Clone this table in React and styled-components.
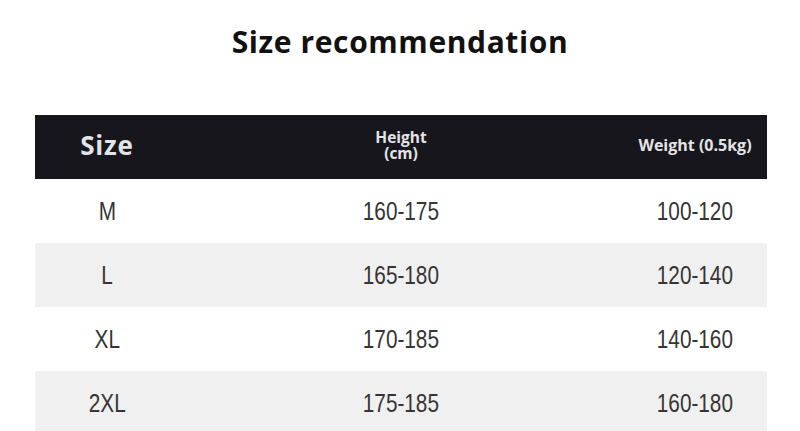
import React from "react";
import styled, { createGlobalStyle } from "styled-components";

const Global = createGlobalStyle`
  html, body { margin: 0; padding: 0; background: #fff; }
  body { width: 800px; height: 431px; overflow: hidden; }
`;

const Page = styled.div`
  width: 800px;
  height: 431px;
  background: #fff;
  overflow: hidden;
`;

const Title = styled.h1`
  margin: 0;
  padding-top: 22px;
  height: 115px;
  box-sizing: border-box;
  text-align: center;
  font-family: "Open Sans", "Noto Sans", sans-serif;
  font-weight: 700;
  font-size: 30px;
  line-height: 40px;
  color: #111;
  letter-spacing: 0.6px;
`;

const Table = styled.div`
  margin-left: 35px;
  width: 732px;
`;

const Row = styled.div`
  display: grid;
  grid-template-columns: 144px 444px 144px;
  height: 64px;
  box-sizing: border-box;
  align-items: center;
  padding-bottom: ${(p) => (p.$head ? 4 : 0)}px;
  background: ${(p) => (p.$head ? "#17161c" : p.$shade ? "#f0f0f0" : "#fff")};
`;

const HeadCell = styled.div`
  text-align: center;
  font-family: "Open Sans", "Noto Sans", sans-serif;
  font-weight: 700;
  color: #e4e4e6;
  font-size: ${(p) => p.$size}px;
  line-height: ${(p) => p.$lh}px;
  letter-spacing: ${(p) => p.$ls || 0}px;
  white-space: nowrap;
`;

const Cell = styled.div`
  text-align: center;
  font-family: "Liberation Sans", Arial, sans-serif;
  font-size: 25px;
  line-height: 30px;
  color: #353535;
`;

const Narrow = styled.span`
  display: inline-block;
  transform: scaleX(0.83);
  transform-origin: center;
`;

const data = [
  ["M", "160-175", "100-120"],
  ["L", "165-180", "120-140"],
  ["XL", "170-185", "140-160"],
  ["2XL", "175-185", "160-180"],
];

export default function App() {
  return (
    <Page>
      <Global />
      <Title>Size recommendation</Title>
      <Table>
        <Row $head>
          <HeadCell $size={26} $lh={30} $ls={0.8}>Size</HeadCell>
          <HeadCell $size={15.5} $lh={16}>
            Height
            <br />
            (cm)
          </HeadCell>
          <HeadCell $size={16} $lh={18}>Weight (0.5kg)</HeadCell>
        </Row>
        {data.map((r, i) => (
          <Row key={r[0]} $shade={i % 2 === 1}>
            {r.map((v) => (
              <Cell key={v}>
                <Narrow>{v}</Narrow>
              </Cell>
            ))}
          </Row>
        ))}
      </Table>
    </Page>
  );
}
